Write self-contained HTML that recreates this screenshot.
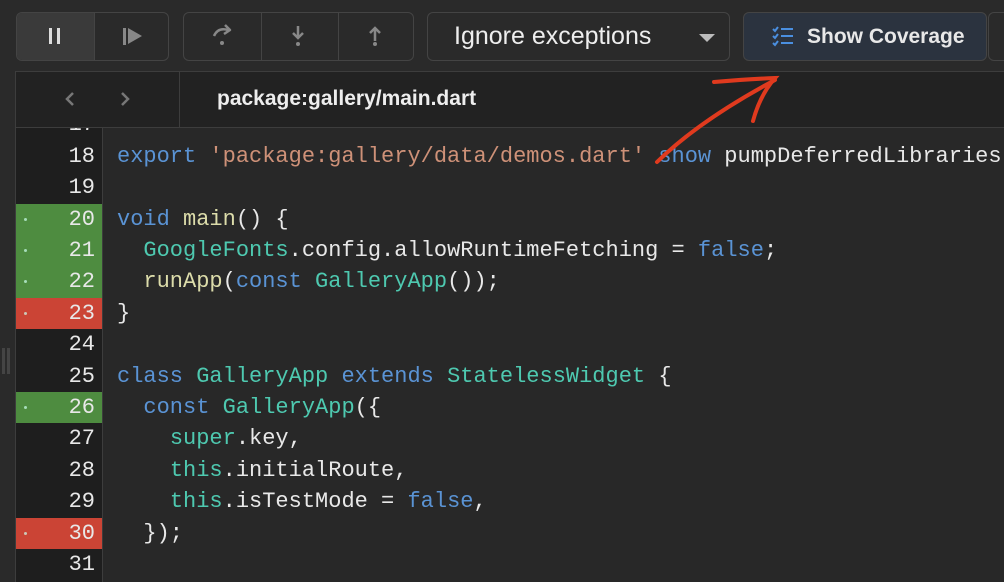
<!DOCTYPE html>
<html style="height:582px;overflow:hidden"><head><style>
body{margin:0;width:1004px;height:582px;background:#2a2a2a;overflow:hidden;position:relative;font-family:"Liberation Sans",sans-serif}
.abs{position:absolute;box-sizing:border-box}
.grp{border:1px solid #444;border-radius:6px;top:12px;height:49px;overflow:hidden}
.cell{position:absolute;top:0;height:100%;border-right:1px solid #444}
.code{position:absolute;left:0;top:128px;width:1004px;height:454px;overflow:hidden;font-family:"Liberation Mono",monospace;font-size:22px;color:#e8e8e8;white-space:pre}
.ln{position:absolute;left:16px;width:86px;height:31.4px;text-align:right;padding-right:7px;box-sizing:border-box;line-height:31.4px}
.cl{position:absolute;left:117px;height:31.4px;line-height:31.4px}
.g{background:#4e8c40}.r{background:#cb4435}
.dot{position:absolute;left:8px;top:14px;width:3px;height:3px;background:#cfe;border-radius:50%;opacity:.7}
.k{color:#5a93d4}.s{color:#ce9178}.t{color:#4ec9b0}.f{color:#dcdcaa}
</style></head><body>
<div class="abs grp" style="left:16px;width:153px">
 <div class="cell" style="left:0;width:77px;background:#3a3a3a"></div>
 <div style="position:absolute;left:32px;top:15px;width:3px;height:16px;background:#ddd"></div>
 <div style="position:absolute;left:40px;top:15px;width:3px;height:16px;background:#ddd"></div>
 <div style="position:absolute;left:106px;top:15px;width:3px;height:17px;background:#888"></div>
 <div style="position:absolute;left:111px;top:15px;width:0;height:0;border-left:14px solid #888;border-top:8.5px solid transparent;border-bottom:8.5px solid transparent"></div>
</div>
<div class="abs grp" style="left:183px;width:231px">
 <div class="cell" style="left:0;width:77px"></div>
 <div class="cell" style="left:77px;width:77px"></div>
 <svg style="position:absolute;left:0;top:0" width="231" height="49" fill="none" stroke="#888" stroke-width="2.5">
  <path d="M30 23 Q34 14 44 17"/><path d="M41 12 L46 17 L40 21" stroke-linejoin="round"/><circle cx="38" cy="30" r="2" fill="#888" stroke="none"/>
  <path d="M114 13 V25 M109 20 L114 25 L119 20"/><circle cx="114" cy="31" r="2" fill="#888" stroke="none"/>
  <path d="M191 15 V28 M186 20 L191 15 L196 20"/><circle cx="191" cy="31" r="2" fill="#888" stroke="none"/>
 </svg>
</div>
<div class="abs grp" style="left:427px;width:303px;color:#eee;font-size:25px;line-height:47px;padding-left:26px">Ignore exceptions
 <div style="position:absolute;right:14px;top:21px;border-top:8px solid #bbb;border-left:8px solid transparent;border-right:8px solid transparent"></div>
</div>
<div class="abs grp" style="left:743px;width:244px;background:#2b333f;color:#e8e8e8;font-size:21px;font-weight:bold;line-height:47px;padding-left:63px">Show Coverage
 <svg style="position:absolute;left:28px;top:13px" width="22" height="22" stroke="#4a8fe0" stroke-width="2" fill="none"><path d="M1 3 L3 5 L6 1 M1 10 L3 12 L6 8 M1 17 L3 19 L6 15"/><path d="M9 3 H21 M9 10 H21 M9 17 H21"/></svg>
</div>
<div class="abs grp" style="left:988px;width:30px"></div>
<div class="abs" style="left:15px;top:71px;width:990px;height:57px;background:#222;border-top:1px solid #3d3d3d;border-left:1px solid #3d3d3d;border-bottom:1px solid #3d3d3d"></div>
<div class="abs" style="left:179px;top:72px;width:1px;height:55px;background:#3d3d3d"></div>
<svg class="abs" style="left:60px;top:88px" width="80" height="24" fill="none" stroke="#777" stroke-width="2.5"><path d="M13 5 L7 11 L13 17"/><path d="M62 5 L68 11 L62 17"/></svg>
<div class="abs" style="left:217px;top:87px;color:#eee;font-size:21px;font-weight:bold">package:gallery/main.dart</div>
<div class="abs" style="left:2px;top:348px;width:3px;height:26px;background:#444"></div>
<div class="abs" style="left:7px;top:348px;width:3px;height:26px;background:#444"></div>
<div class="code"><div style="position:absolute;left:15px;top:0;width:990px;height:454px;background:#282828;border-left:1px solid #3d3d3d;box-sizing:border-box"></div><div style="position:absolute;left:16px;top:0;width:87px;height:454px;background:#1e1e1e;border-right:1px solid #3d3d3d;box-sizing:border-box"></div><div class="ln" style="top:-18.6px">17</div><div class="ln" style="top:12.8px">18</div><div class="ln" style="top:44.2px">19</div><div class="ln g" style="top:75.6px"><i class="dot"></i>20</div><div class="ln g" style="top:107px"><i class="dot"></i>21</div><div class="ln g" style="top:138.4px"><i class="dot"></i>22</div><div class="ln r" style="top:169.8px"><i class="dot"></i>23</div><div class="ln" style="top:201.2px">24</div><div class="ln" style="top:232.6px">25</div><div class="ln g" style="top:264px"><i class="dot"></i>26</div><div class="ln" style="top:295.4px">27</div><div class="ln" style="top:326.8px">28</div><div class="ln" style="top:358.2px">29</div><div class="ln r" style="top:389.6px"><i class="dot"></i>30</div><div class="ln" style="top:421px">31</div><div class="cl" style="top:12.8px"><span class="k">export</span> <span class="s">'package:gallery/data/demos.dart'</span> <span class="k">show</span> pumpDeferredLibraries;</div><div class="cl" style="top:75.6px"><span class="k">void</span> <span class="f">main</span>() {</div><div class="cl" style="top:107px">  <span class="t">GoogleFonts</span>.config.allowRuntimeFetching = <span class="k">false</span>;</div><div class="cl" style="top:138.4px">  <span class="f">runApp</span>(<span class="k">const</span> <span class="t">GalleryApp</span>());</div><div class="cl" style="top:169.8px">}</div><div class="cl" style="top:232.6px"><span class="k">class</span> <span class="t">GalleryApp</span> <span class="k">extends</span> <span class="t">StatelessWidget</span> {</div><div class="cl" style="top:264px">  <span class="k">const</span> <span class="t">GalleryApp</span>({</div><div class="cl" style="top:295.4px">    <span class="t">super</span>.key,</div><div class="cl" style="top:326.8px">    <span class="t">this</span>.initialRoute,</div><div class="cl" style="top:358.2px">    <span class="t">this</span>.isTestMode = <span class="k">false</span>,</div><div class="cl" style="top:389.6px">  });</div></div>
<svg class="abs" style="left:0;top:0" width="1004" height="582" fill="none" stroke="#e03a1e" stroke-width="4" stroke-linecap="round">
<path d="M657 162 Q700 120 775 80"/><path d="M714 82 Q750 79 775 78 Q760 95 753 121"/>
</svg>
</body></html>
